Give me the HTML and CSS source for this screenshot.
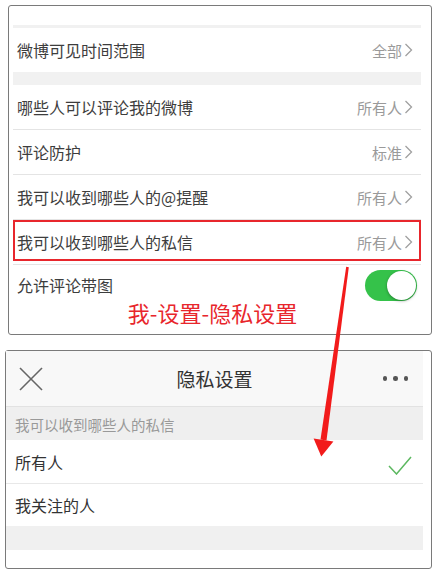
FILE: index.html
```html
<!DOCTYPE html>
<html lang="zh-CN">
<head>
    <meta charset="UTF-8">
    <meta name="viewport" content="width=device-width, initial-scale=1.0">
    <title>隐私设置</title>
    <link rel="stylesheet" href="styles.css">
</head>
<body>

    <!-- Capture 1 : liste des réglages -->
    <div class="panel panel-top">
        <div class="top-space"></div>
        <div class="band thin"></div>
        <div class="row">
            <span class="label">微博可见时间范围</span>
            <span class="value">全部<svg class="chevron" viewBox="0 0 9 14"><polyline points="1.5,1 7.5,7 1.5,13"/></svg></span>
        </div>
        <div class="band"></div>
        <div class="row line">
            <span class="label">哪些人可以评论我的微博</span>
            <span class="value">所有人<svg class="chevron" viewBox="0 0 9 14"><polyline points="1.5,1 7.5,7 1.5,13"/></svg></span>
        </div>
        <div class="row line">
            <span class="label">评论防护</span>
            <span class="value">标准<svg class="chevron" viewBox="0 0 9 14"><polyline points="1.5,1 7.5,7 1.5,13"/></svg></span>
        </div>
        <div class="row line">
            <span class="label">我可以收到哪些人的@提醒</span>
            <span class="value">所有人<svg class="chevron" viewBox="0 0 9 14"><polyline points="1.5,1 7.5,7 1.5,13"/></svg></span>
        </div>
        <div class="row line marked">
            <span class="label">我可以收到哪些人的私信</span>
            <span class="value">所有人<svg class="chevron" viewBox="0 0 9 14"><polyline points="1.5,1 7.5,7 1.5,13"/></svg></span>
        </div>
        <div class="row short">
            <span class="label">允许评论带图</span>
            <span class="toggle"><span class="knob"></span></span>
        </div>
        <div class="note">我-设置-隐私设置</div>
    </div>

    <!-- Capture 2 : page Hidden settings -->
    <div class="panel panel-bottom">
        <div class="nav">
            <svg class="close" viewBox="0 0 26 26"><line x1="2" y1="2" x2="24" y2="24"/><line x1="24" y1="2" x2="2" y2="24"/></svg>
            <span class="nav-title">隐私设置</span>
            <span class="dots"><i></i><i></i><i></i></span>
        </div>
        <div class="section-title">我可以收到哪些人的私信</div>
        <div class="option line">
            <span>所有人</span>
            <svg class="check" viewBox="0 0 24 19"><polyline points="1,10 8.5,18 23,1"/></svg>
        </div>
        <div class="option">
            <span>我关注的人</span>
        </div>
        <div class="band tall"></div>
        <div class="bottom-space"></div>
    </div>

    <!-- Flèche rouge -->
    <svg class="arrow" viewBox="0 0 437 575">
        <polygon points="348.8,267.2 346.2,266.8 320.5,439.6 326.5,440.4"/>
        <polygon points="313.6,438.6 333.4,441.4 321.3,456.5"/>
    </svg>

</body>
</html>
```

FILE: styles.css
```css
body {
    margin: 0;
    background: #ffffff;
    font-family: "Noto Sans CJK SC", "Noto Sans", sans-serif;
    color: #333333;
    position: relative;
    width: 437px;
    height: 575px;
    overflow: hidden;
}

.panel {
    border: 1px solid #7a7a7a;
    border-radius: 3px;
    background: #ffffff;
}

/* Capture du haut */
.panel-top {
    margin: 5px 5px 0 8px;
    padding: 0 10px 11px 4px;
}

.top-space {
    height: 19px;
}

.band {
    height: 13px;
    background-color: #f1f1f1;
}

.band.thin {
    height: 3px;
}

.band.tall {
    height: 24px;
    background-color: #f0f0f0;
}

.row {
    height: 44px;
    display: flex;
    align-items: center;
    justify-content: space-between;
    padding: 0 8px 0 4px;
    font-size: 16px;
    position: relative;
}

.row.line {
    border-bottom: 1px solid #e4e4e4;
}

.row.short {
    height: 40px;
}

/* Cadre rouge autour de la ligne */
.row.marked::after {
    content: "";
    position: absolute;
    top: 0;
    left: 0;
    right: 0;
    bottom: 3px;
    border: 2px solid #e8262c;
}

.label {
    color: #3d3d3d;
}

.value {
    display: flex;
    align-items: center;
    gap: 2px;
    color: #9a9a9a;
    font-size: 15px;
}

.chevron {
    width: 9px;
    height: 14px;
    fill: none;
    stroke: #a0a0a0;
    stroke-width: 1.3;
}

.toggle {
    width: 52px;
    height: 31px;
    border-radius: 16px;
    background-color: #35c24a;
    margin-right: -4px;
    position: relative;
}

.knob {
    position: absolute;
    top: 1px;
    right: 1px;
    width: 29px;
    height: 29px;
    border-radius: 50%;
    background: #ffffff;
    box-shadow: 0 1px 3px rgba(0, 0, 0, 0.35);
}

.note {
    margin-top: -3px;
    height: 21px;
    line-height: 20px;
    text-align: center;
    padding-right: 9px;
    font-size: 22px;
    color: #e8262c;
}

/* Capture du bas */
.panel-bottom {
    margin: 15px 5px 0 5px;
    padding-right: 8px;
}

.nav {
    height: 55px;
    display: flex;
    align-items: center;
    justify-content: space-between;
    padding: 0 14px 0 12px;
    background-color: #f8f8f8;
    border-bottom: 1px solid #e2e2e2;
}

.close {
    width: 26px;
    height: 26px;
    stroke: #666666;
    stroke-width: 1.6;
}

.nav-title {
    font-size: 19px;
    color: #333333;
    margin-left: 2px;
}

.dots {
    display: flex;
    gap: 6px;
    width: 26px;
}

.dots i {
    width: 4.5px;
    height: 4.5px;
    border-radius: 50%;
    background-color: #555555;
}

.section-title {
    height: 33px;
    line-height: 35px;
    padding-left: 9px;
    font-size: 14.5px;
    color: #999999;
    background-color: #efefef;
}

.option {
    height: 43px;
    display: flex;
    align-items: center;
    justify-content: space-between;
    padding: 0 11px 0 9px;
    font-size: 16px;
}

.option.line {
    border-bottom: 1px solid #e8e8e8;
    height: 43px;
}

.option + .option {
    height: 42px;
}

.check {
    width: 24px;
    height: 19px;
    fill: none;
    stroke: #5cb860;
    stroke-width: 1.5;
    margin-top: 8px;
}

.bottom-space {
    height: 18px;
}

/* Flèche par-dessus les deux captures */
.arrow {
    position: absolute;
    top: 0;
    left: 0;
    width: 437px;
    height: 575px;
    pointer-events: none;
    fill: #f21b1b;
}
```
